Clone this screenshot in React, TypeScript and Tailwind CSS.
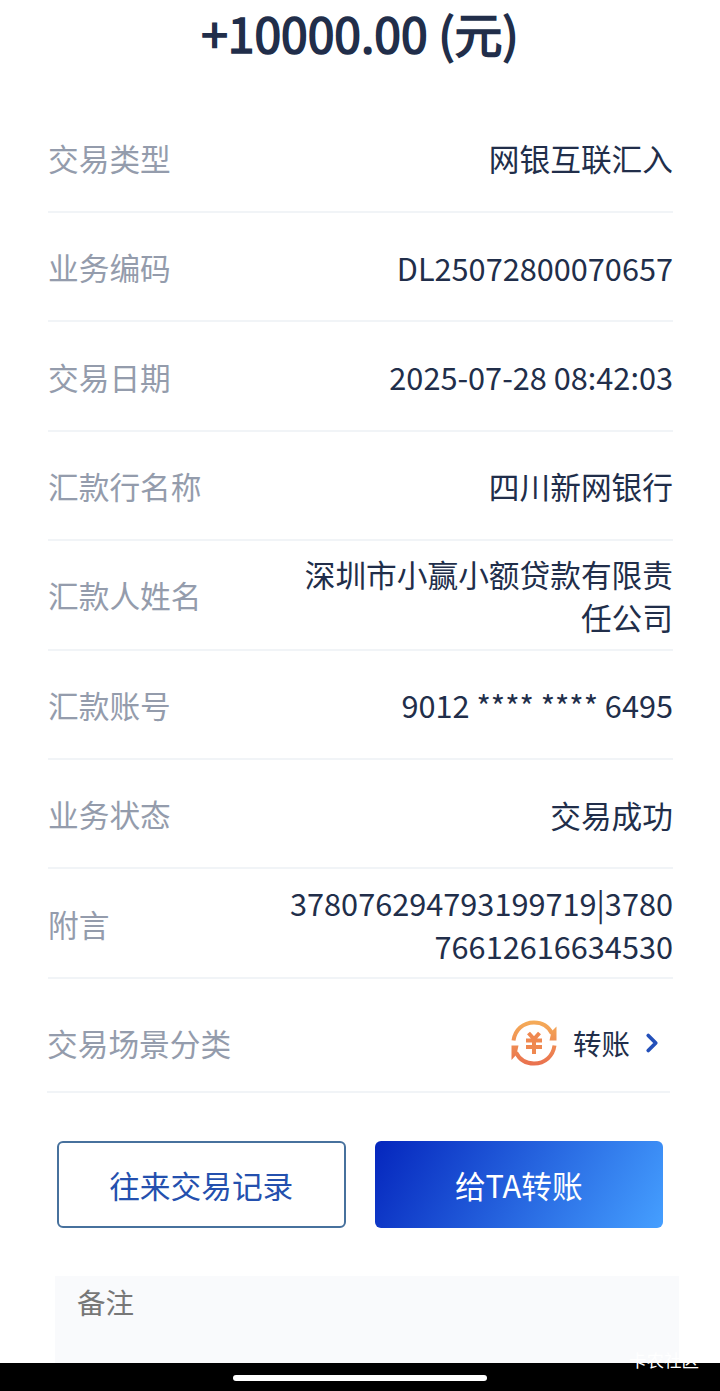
import { ChevronRight } from 'lucide-react';

const details = [
  { label: '交易类型', value: '网银互联汇入' },
  { label: '业务编码', value: 'DL25072800070657' },
  { label: '交易日期', value: '2025-07-28 08:42:03' },
  { label: '汇款行名称', value: '四川新网银行' },
  { label: '汇款人姓名', value: '深圳市小赢小额贷款有限责任公司' },
  { label: '汇款账号', value: '9012 **** **** 6495' },
  { label: '业务状态', value: '交易成功' },
  { label: '附言', value: '378076294793199719|378076612616634530' },
];

function TransferIcon() {
  return (
    <svg width="46" height="46" viewBox="0 0 46 46" fill="none">
      <defs>
        <linearGradient id="transfer" x1="0" y1="0" x2="0" y2="46" gradientUnits="userSpaceOnUse">
          <stop stopColor="#f5ad58" />
          <stop offset="1" stopColor="#e96f4e" />
        </linearGradient>
      </defs>
      <path d="M2.500 20.500C4 10 12 2.500 23 2.500c8 0 14.500 4 18 11" stroke="url(#transfer)" strokeWidth="4" />
      <path d="M45.500 6.500v14H38.500l2-9z" fill="url(#transfer)" />
      <path d="M43.500 25.500C42 36 34 43.500 23 43.500c-8 0-14.500-4-18-11" stroke="url(#transfer)" strokeWidth="4" />
      <path d="M.5 40V25.500h7l-2 9z" fill="url(#transfer)" />
      <path d="M17.500 13l5.500 6 5.500-6M15 20.500h16M15 27h16M23 19v15" stroke="#ef8850" strokeWidth="4" />
    </svg>
  );
}

export default function App() {
  return (
    <div className="flex h-[1391px] w-[720px] flex-col overflow-hidden bg-white font-['Noto_Sans_CJK_SC',sans-serif] text-[30.7px] text-[#212e4a]">
      <h1 className="h-[103.6px] shrink-0 text-center text-[48px] leading-[65px] [-webkit-text-stroke:1.6px_#212e4a]">
        +10000.00 (元)
      </h1>

      <div className="mr-[47px] ml-12 shrink-0">
        {details.map((item) => (
          <div
            key={item.label}
            className="flex h-[109.4px] items-center justify-between border-b-2 border-[#f1f4f7] pt-px"
          >
            <span className="text-[#949cac]">{item.label}</span>
            <span className="w-[385px] text-right leading-[43px] break-all">{item.value}</span>
          </div>
        ))}
      </div>

      <div className="mr-[50px] ml-[47px] flex h-[114.2px] shrink-0 items-center border-b-2 border-[#f1f4f7] pt-[17px]">
        <span className="text-[#949cac]">交易场景分类</span>
        <div className="ml-auto flex items-center">
          <TransferIcon />
          <span className="ml-4 text-[28.5px]">转账</span>
          <ChevronRight className="mr-[3px] ml-[7px] size-[30px]" color="#2450ba" strokeWidth={3} />
        </div>
      </div>

      <div className="mt-12 grid shrink-0 grid-cols-2 gap-[29px] px-[57px]">
        <button className="h-[87px] rounded-md border-2 border-[#47719d] pt-px text-[#2450ae]">
          往来交易记录
        </button>
        <button className="h-[87px] rounded-md bg-[linear-gradient(120deg,#0526bd,#459fff)] pt-px text-white">
          给TA转账
        </button>
      </div>

      <div className="mt-12 mr-[41px] ml-[55px] flex-1 bg-[#f9fafc] px-[22px] pt-[5px] text-[28.5px] text-[#777]">
        备注
      </div>

      <div className="relative flex h-7 shrink-0 justify-center bg-black pt-3">
        <div className="h-[6px] w-[254px] rounded-full bg-white" />
        <span className="absolute -top-[15px] right-[21px] text-[17.5px] leading-[24px] text-white">卡农社区</span>
      </div>
    </div>
  );
}
